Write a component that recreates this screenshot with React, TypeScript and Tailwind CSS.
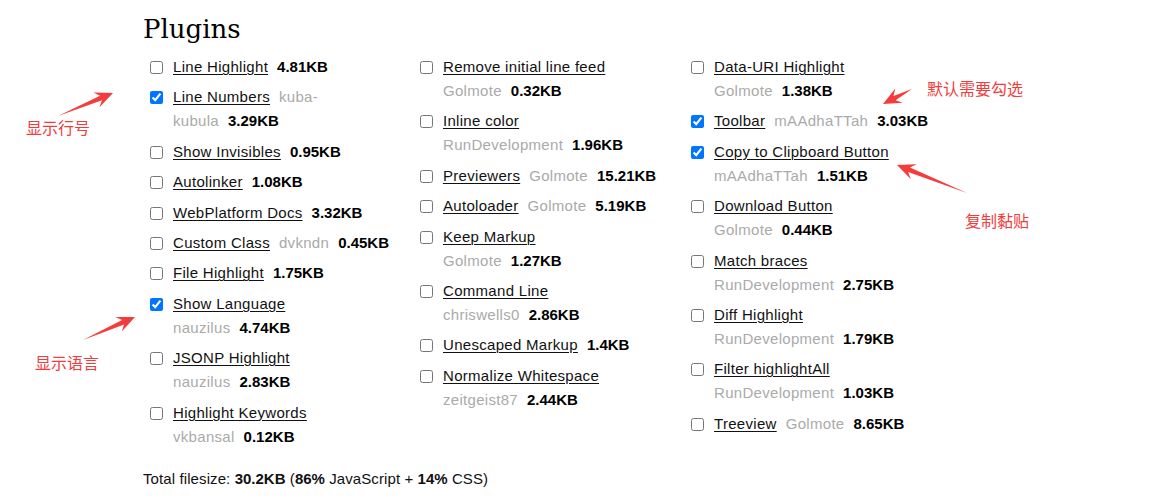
import React from 'react';

type Plugin = {
  title: string;
  author?: string;
  size: string;
  checked?: boolean;
  wrap?: boolean; // author + size go on a second line
  split?: [string, string]; // author broken across lines
};

const columns: Plugin[][] = [
  [
    { title: 'Line Highlight', size: '4.81KB' },
    { title: 'Line Numbers', author: 'kuba-kubula', size: '3.29KB', checked: true, split: ['kuba-', 'kubula'] },
    { title: 'Show Invisibles', size: '0.95KB' },
    { title: 'Autolinker', size: '1.08KB' },
    { title: 'WebPlatform Docs', size: '3.32KB' },
    { title: 'Custom Class', author: 'dvkndn', size: '0.45KB' },
    { title: 'File Highlight', size: '1.75KB' },
    { title: 'Show Language', author: 'nauzilus', size: '4.74KB', checked: true, wrap: true },
    { title: 'JSONP Highlight', author: 'nauzilus', size: '2.83KB', wrap: true },
    { title: 'Highlight Keywords', author: 'vkbansal', size: '0.12KB', wrap: true },
  ],
  [
    { title: 'Remove initial line feed', author: 'Golmote', size: '0.32KB', wrap: true },
    { title: 'Inline color', author: 'RunDevelopment', size: '1.96KB', wrap: true },
    { title: 'Previewers', author: 'Golmote', size: '15.21KB' },
    { title: 'Autoloader', author: 'Golmote', size: '5.19KB' },
    { title: 'Keep Markup', author: 'Golmote', size: '1.27KB', wrap: true },
    { title: 'Command Line', author: 'chriswells0', size: '2.86KB', wrap: true },
    { title: 'Unescaped Markup', size: '1.4KB' },
    { title: 'Normalize Whitespace', author: 'zeitgeist87', size: '2.44KB', wrap: true },
  ],
  [
    { title: 'Data-URI Highlight', author: 'Golmote', size: '1.38KB', wrap: true },
    { title: 'Toolbar', author: 'mAAdhaTTah', size: '3.03KB', checked: true },
    { title: 'Copy to Clipboard Button', author: 'mAAdhaTTah', size: '1.51KB', checked: true, wrap: true },
    { title: 'Download Button', author: 'Golmote', size: '0.44KB', wrap: true },
    { title: 'Match braces', author: 'RunDevelopment', size: '2.75KB', wrap: true },
    { title: 'Diff Highlight', author: 'RunDevelopment', size: '1.79KB', wrap: true },
    { title: 'Filter highlightAll', author: 'RunDevelopment', size: '1.03KB', wrap: true },
    { title: 'Treeview', author: 'Golmote', size: '8.65KB' },
  ],
];

function PluginItem({ p }: { p: Plugin }) {
  const title = <a className="underline underline-offset-2 decoration-1 cursor-pointer">{p.title}</a>;
  const size = <strong className="ml-[9px] font-bold tracking-normal text-black">{p.size}</strong>;

  let lines: React.ReactNode;
  if (p.split) {
    lines = (
      <>
        <div>{title}<span className="ml-[9px] text-[#aaa]">{p.split[0]}</span></div>
        <div><span className="text-[#aaa]">{p.split[1]}</span>{size}</div>
      </>
    );
  } else if (p.wrap) {
    lines = (
      <>
        <div>{title}</div>
        <div><span className="text-[#aaa]">{p.author}</span>{size}</div>
      </>
    );
  } else {
    lines = (
      <div>
        {title}
        {p.author && <span className="ml-[9px] text-[#aaa]">{p.author}</span>}
        {size}
      </div>
    );
  }

  return (
    <label className="flex items-start mb-[6.4px]">
      <input
        type="checkbox"
        defaultChecked={p.checked}
        className="m-0 mt-[6px] ml-[7px] mr-[10px] h-[13px] w-[13px] shrink-0"
      />
      <div className="leading-6 whitespace-nowrap tracking-[0.3px]">{lines}</div>
    </label>
  );
}

type ArrowProps = { x1: number; y1: number; x2: number; y2: number };

function Arrow({ x1, y1, x2, y2 }: ArrowProps) {
  const dx = x2 - x1;
  const dy = y2 - y1;
  const len = Math.hypot(dx, dy);
  const ux = dx / len;
  const uy = dy / len;
  const nx = -uy;
  const ny = ux;
  const head = 18;
  const neck = 13;
  const s = 2.4;
  const w = 8;
  const pt = (d: number, o: number) => `${x2 - ux * d + nx * o},${y2 - uy * d + ny * o}`;
  const points = [
    `${x1},${y1}`,
    pt(neck, s),
    pt(head, w),
    `${x2},${y2}`,
    pt(head, -w),
    pt(neck, -s),
  ].join(' ');
  return <polygon points={points} fill="#f53b3b" />;
}

export default function App() {
  return (
    <div className="relative w-[1161px] h-[502px] bg-white text-[#111] overflow-hidden" style={{ fontFamily: '"Liberation Sans", Arial, sans-serif' }}>
      <div className="pl-[143px] pt-[13px]">
        <h2 className="text-[26px] leading-[32px] mb-[10px] text-black" style={{ fontFamily: '"DejaVu Serif", serif' }}>
          Plugins
        </h2>

        <div className="grid grid-cols-[270px_271px_270px] text-[15px]">
          {columns.map((col, i) => (
            <div key={i} className="flex flex-col">
              {col.map((p) => (
                <PluginItem key={p.title} p={p} />
              ))}
            </div>
          ))}
        </div>

        <p className="mt-[12px] text-[15px] leading-6 tracking-[0.1px]">
          Total filesize: <strong className="tracking-normal">30.2KB</strong> (<strong className="tracking-normal">86%</strong> JavaScript + <strong className="tracking-normal">14%</strong> CSS)
        </p>
      </div>

      {/* annotations */}
      <svg className="absolute inset-0 pointer-events-none" width="1161" height="502">
        <Arrow x1={58} y1={116} x2={113} y2={93} />
        <Arrow x1={83} y1={340} x2={135} y2={317} />
        <Arrow x1={912} y1={89} x2={883} y2={104} />
        <Arrow x1={967} y1={193} x2={897} y2={165} />
      </svg>
      <div
        className="absolute inset-0 pointer-events-none text-[16px] leading-4 text-[#f23c3c]"
        style={{ fontFamily: '"Noto Sans CJK SC", sans-serif' }}
      >
        <span className="absolute left-[26px] top-[119px]">显示行号</span>
        <span className="absolute left-[35px] top-[354px]">显示语言</span>
        <span className="absolute left-[927px] top-[80px]">默认需要勾选</span>
        <span className="absolute left-[965px] top-[212px]">复制黏贴</span>
      </div>
    </div>
  );
}
